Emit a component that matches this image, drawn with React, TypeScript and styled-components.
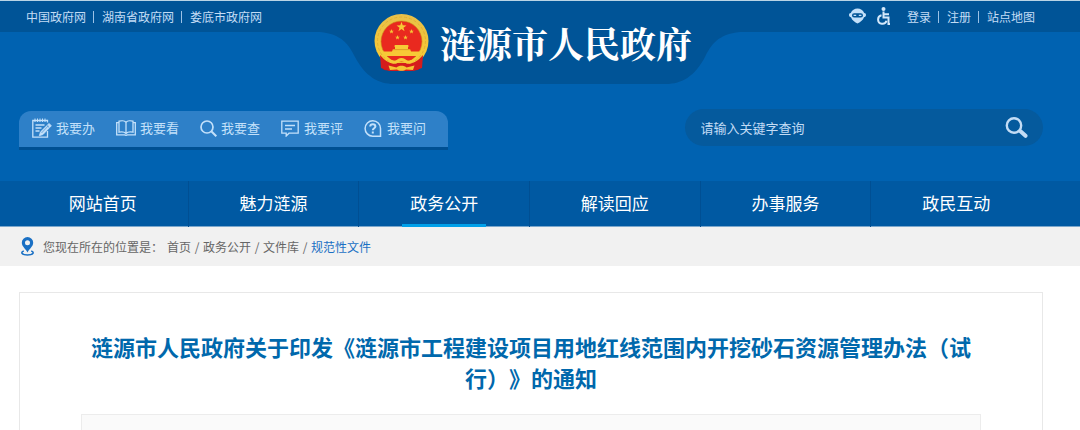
import React from "react";
import styled, { createGlobalStyle } from "styled-components";

const Global = createGlobalStyle`
  *, *::before, *::after { box-sizing: border-box; }
  body { margin: 0; background: #fff; font: 12px/20px "Noto Sans CJK SC", sans-serif; color: #666; }
  a { color: inherit; text-decoration: none; }
  ul, ol { margin: 0; padding: 0; list-style: none; }
`;

const Header = styled.header`
  background: #0062b1;
  border-top: 1px solid #b9d4e6;
`;

const Masthead = styled.div`
  display: grid;
  grid-template-columns: 1fr 420px 1fr;
  align-items: start;
  padding: 0 38px 0 18px;
  background: linear-gradient(#005497 31px, transparent 31px);
`;

const TextLinks = styled.nav<{ $end?: boolean }>`
  display: flex;
  align-items: center;
  justify-content: ${(p) => (p.$end ? "flex-end" : "flex-start")};
  height: 32px;
  padding: 0 7px 0 8px;
  color: #c3dcf5;
  white-space: nowrap;
`;

const Bar = styled.span`
  width: 1px;
  height: 12px;
  margin: 0 8px 0 7px;
  background: #9cc2e6;
`;

const Tools = styled.div`
  display: flex;
  align-items: center;
  gap: 11px;
  margin-right: 16px;
  padding-bottom: 3px;
  a { display: flex; }
`;

const Brand = styled.a`
  position: relative;
  display: flex;
  align-items: center;
  gap: 11px;
  height: 83px;
  padding-left: 54px;
`;

const Notch = styled.svg`
  position: absolute;
  inset: 0;
`;

const Emblem = styled.svg`
  position: relative;
  flex: none;
`;

const SiteName = styled.h1`
  position: relative;
  margin: 0;
  font: 700 36px/48px "Noto Serif CJK SC", "Noto Sans CJK SC", serif;
  color: #fff;
  white-space: nowrap;
`;

const Actions = styled.div`
  display: flex;
  align-items: flex-start;
  justify-content: space-between;
  padding: 25px 37px 31px 19px;
`;

const QuickLinks = styled.nav`
  display: flex;
  gap: 21px;
  margin-top: 2px;
  height: 39px;
  padding: 0 22px 2px 13px;
  background: #2e80c8;
  border-bottom: 3px solid #005093;
  border-radius: 12px 12px 0 0;
`;

const QuickLink = styled.a`
  display: flex;
  align-items: center;
  gap: 4px;
  font-size: 13px;
  color: #c3e0fa;
`;

const Search = styled.form`
  display: flex;
  align-items: center;
  width: 35%;
  height: 37px;
  padding: 0 15px 0 16px;
  border-radius: 19px;
  background: #055a9d;
`;

const SearchInput = styled.input`
  flex: 1;
  min-width: 0;
  padding: 0;
  border: 0;
  outline: 0;
  background: none;
  font: 13px/20px "Noto Sans CJK SC", sans-serif;
  color: #c3dcf5;
  &::placeholder { color: #c3dcf5; opacity: 1; }
`;

const SearchButton = styled.button`
  display: flex;
  padding: 0;
  border: 0;
  background: none;
`;

const MainNav = styled.nav`
  padding: 0 39px 0 18px;
  background: linear-gradient(#0059a2 45px, #7ba7cc 45px);
`;

const NavList = styled.ul`
  display: flex;
`;

const NavItem = styled.li`
  display: flex;
  flex: 1;
  justify-content: center;
  & + & { border-left: 1px solid #004f93; }
`;

const NavLink = styled.a<{ $active?: boolean }>`
  height: 46px;
  padding: 0 8px;
  border-bottom: 3px solid ${(p) => (p.$active ? "#00a0e9" : "transparent")};
  font-size: 17px;
  line-height: 44px;
  color: #fff;
`;

const Crumbs = styled.nav`
  display: flex;
  align-items: center;
  height: 39px;
  padding: 0 20px;
  background: #f1f1f1;
`;

const CrumbLabel = styled.span`
  margin: 0 4px 0 8px;
`;

const CrumbList = styled.ol`
  display: flex;
  li + li::before { content: "/"; display: inline-block; width: 12px; text-align: center; color: #666; }
`;

const CrumbLink = styled.a<{ $current?: boolean }>`
  color: ${(p) => (p.$current ? "#1a70c4" : "#666")};
`;

const Article = styled.main`
  margin: 26px 37px 0 19px;
  padding: 38px 61px 0;
  border: 1px solid #e8e8e8;
  border-bottom: 0;
`;

const Title = styled.h2`
  margin: 0 0 21px;
  font-size: 22px;
  font-weight: 700;
  line-height: 31px;
  text-align: center;
  text-spacing-trim: space-all;
  color: #0068ac;
`;

const Meta = styled.div`
  height: 17px;
  border: 1px solid #ececec;
  border-bottom: 0;
  background: #fafafa;
`;

const star = (cx: number, cy: number, r: number) =>
  Array.from({ length: 10 }, (_, i) => {
    const a = (Math.PI / 5) * i - Math.PI / 2;
    const q = i % 2 ? r * 0.4 : r;
    return `${(cx + q * Math.cos(a)).toFixed(2)},${(cy + q * Math.sin(a)).toFixed(2)}`;
  }).join(" ");

const NationalEmblem = () => (
  <Emblem width="55" height="58" viewBox="0 0 55 58" aria-hidden="true">
    <defs>
      <linearGradient id="gold" x1="0" y1="0" x2="0" y2="1">
        <stop offset="0" stopColor="#e8c04a" />
        <stop offset="0.5" stopColor="#f3c53a" />
        <stop offset="1" stopColor="#f8cf35" />
      </linearGradient>
    </defs>
    <path d="M8 40L47 40L48 52L44 56L36 57H18L10 56L7 52Z" fill="#c8161d" />
    <circle cx="27.5" cy="27" r="27" fill="url(#gold)" />
    <circle cx="27.5" cy="27" r="24" fill="none" stroke="#e0b035" strokeWidth="1" strokeDasharray="3 2" />
    <circle cx="27.5" cy="27.5" r="20.5" fill="#e9291f" stroke="#c98f1d" strokeWidth="0.6" />
    <polygon points={star(27.5, 13, 5.2)} fill="#f7c936" />
    <polygon points={star(17.5, 17.5, 2.5)} fill="#f7c936" />
    <polygon points={star(37.5, 17.5, 2.5)} fill="#f7c936" />
    <polygon points={star(23.5, 23.5, 2.5)} fill="#f7c936" />
    <polygon points={star(31.5, 23.5, 2.5)} fill="#f7c936" />
    <path d="M21 31h13l1 1.5h-1V35h2l1 2.500h9v4.500H9v-4.500h9l1-2.500h2v-2.500h-1z" fill="#f7c936" />
    <path d="M19 35.6h17" stroke="#d98a1d" strokeWidth="0.7" />
    <path d="M13 42h29l-5 4-4 .5-5.500-2.500-5.500 2.500-4-.5z" fill="#e9291f" />
    <path d="M6 41c5 6 10 9 17 9l-7 7-9-3zM49 41c-5 6-10 9-17 9l7 7 9-3z" fill="#d51c1c" />
    <path d="M20 49h15l3 8H17z" fill="#d51c1c" />
    <path d="M13 44c4 3 8 4 11 1 2-1.500 5-1.500 7 0 3 3 7 2 11-1l-3 4c-3 2-6 2.500-8 .5-2-1.500-5-1.500-7 0-2 2-5 1.500-8-.5z" fill="#f7c936" />
    <path d="M14.500 51.500l8 2c2-2.500 8-2.500 10 0l8-2-1.500 4.500-7-.5c-2 1.700-7 1.700-9 0l-7 .5z" fill="#f5c433" />
  </Emblem>
);

const line = { fill: "none", stroke: "#c3e0fa", strokeWidth: 1.3 } as const;

const NoteIcon = () => (
  <svg width="20" height="20" viewBox="0 0 20 20" {...line} aria-hidden="true">
    <path d="M15.500 4.500V2.500H.8v16.700h14.700V13" />
    <path d="M3 0.500v3.500M5.500 .5v3.500M8 .5v3.500M10.500 .5v3.500M13 .5v3.500" strokeWidth="1" />
    <path d="M3.500 7h9M3.500 10h6M3.500 13h4" />
    <path d="M17 5.500l2.400 2.200-8.400 8.800-3.700 1.200 1.200-3.800z" fill="#c3e0fa" strokeWidth="0.8" />
    <path d="M9.500 15l7-7.300M14.800 7.300l2.500 2.300" stroke="#2e80c8" strokeWidth="0.600" />
  </svg>
);
const BookIcon = () => (
  <svg width="20" height="16" viewBox="0 0 20 16" {...line} aria-hidden="true">
    <path d="M10 2.200C8.500 .6 5 .5 3 1.200v11c2.500-.6 5.500-.3 7 1.300 1.500-1.600 4.500-1.900 7-1.300v-11C15 .5 11.500 .6 10 2.200zM10 2v11.500" />
    <path d="M3 2.600H.7v12.200h7.800l1.500.6 1.500-.6h7.800V2.600H17" />
  </svg>
);
const FindIcon = () => (
  <svg width="17" height="17" viewBox="0 0 17 17" {...line} strokeWidth="1.700" aria-hidden="true">
    <circle cx="7" cy="7" r="6" />
    <path d="M11.300 11.300l5 5" strokeWidth="2" />
  </svg>
);
const CommentIcon = () => (
  <svg width="19" height="17" viewBox="0 0 19 17" {...line} aria-hidden="true">
    <path d="M.8 1.200h16.400v12H8l-2.800 2.800v-2.800H.8zM4 5.500h10M4 9h7" />
  </svg>
);
const AskIcon = () => (
  <svg width="19" height="17" viewBox="0 0 19 17" {...line} strokeWidth="1.500" aria-hidden="true">
    <path d="M16.500 16.200H8.700A7.700 7.700 0 1 1 16.500 8.500z" />
    <path d="M6.200 6.600c0-3.200 5.200-3.200 5.200 0C11.400 8.300 8.800 8.300 8.800 10.300M8.800 11.600v2" strokeWidth="2" />
  </svg>
);
const RobotIcon = () => (
  <svg width="17" height="16" viewBox="0 0 17 16" fill="#c3e0fa" aria-hidden="true">
    <path d="M1.800 5C3 2 5.500.4 8.500.4S14 2 15.200 5c1.200 0 1.800.9 1.800 2s-.7 2-2 2.200c-1 3.300-4 4.700-6.500 6.400C6 13.900 3 12.500 2 9.200.700 9 0 8.100 0 7s.600-2 1.800-2z" />
    <rect x="3" y="5.300" width="11" height="4.200" rx="2.100" fill="#005497" />
    <path d="M4.600 7.400h2.600M9.800 7.400h2.600" fill="none" stroke="#c3e0fa" strokeWidth="1.200" />
  </svg>
);
const WheelchairIcon = () => (
  <svg width="14" height="18" viewBox="0 0 14 18" fill="none" stroke="#d3e8fb" strokeWidth="2" aria-hidden="true">
    <circle cx="6.500" cy="2" r="2" fill="#d3e8fb" stroke="none" />
    <path d="M6.500 4.500v6h5v6.500H13M6.500 7.200H12" />
    <path d="M4.500 8.300a4.300 4.300 0 1 0 5 5.500" />
  </svg>
);
const PinIcon = () => (
  <svg width="15" height="19" viewBox="0 0 15 19" fill="#1a70c4" aria-hidden="true">
    <path fillRule="evenodd" d="M7.500 0a5.700 5.700 0 0 1 5.700 5.700C13.200 9.500 9 12 7.500 15.500 6 12 1.800 9.500 1.800 5.700A5.700 5.700 0 0 1 7.500 0zm0 3.200a2.500 2.500 0 1 0 0 5 2.500 2.500 0 0 0 0-5z" />
    <path d="M3.800 14C0 15.200 2 18 7.500 18s7.500-2.800 3.700-4" fill="none" stroke="#1a70c4" strokeWidth="1.600" />
  </svg>
);

const quick = [
  { label: "我要办", icon: <NoteIcon /> },
  { label: "我要看", icon: <BookIcon /> },
  { label: "我要查", icon: <FindIcon /> },
  { label: "我要评", icon: <CommentIcon /> },
  { label: "我要问", icon: <AskIcon /> },
];
const sections = ["网站首页", "魅力涟源", "政务公开", "解读回应", "办事服务", "政民互动"];
const trail = ["首页", "政务公开", "文件库", "规范性文件"];

const Piped = ({ items }: { items: string[] }) => (
  <>
    {items.map((t, i) => (
      <React.Fragment key={t}>
        {i > 0 && <Bar />}
        <a href="#">{t}</a>
      </React.Fragment>
    ))}
  </>
);

export default function App() {
  return (
    <>
      <Global />
      <Header>
        <Masthead>
          <TextLinks>
            <Piped items={["中国政府网", "湖南省政府网", "娄底市政府网"]} />
          </TextLinks>
          <Brand href="#">
            <Notch width="420" height="83" viewBox="0 0 420 83" aria-hidden="true">
              <path d="M0 0H420V31C398 33 391 44 385 56C375 75 362 83 346 83H74C58 83 45 75 35 56C29 44 22 33 0 31Z" fill="#005497" />
            </Notch>
            <NationalEmblem />
            <SiteName>涟源市人民政府</SiteName>
          </Brand>
          <TextLinks $end>
            <Tools>
              <a href="#" aria-label="智能问答"><RobotIcon /></a>
              <a href="#" aria-label="无障碍"><WheelchairIcon /></a>
            </Tools>
            <Piped items={["登录", "注册", "站点地图"]} />
          </TextLinks>
        </Masthead>
        <Actions>
          <QuickLinks>
            {quick.map((q) => (
              <QuickLink href="#" key={q.label}>{q.icon}{q.label}</QuickLink>
            ))}
          </QuickLinks>
          <Search>
            <SearchInput type="text" aria-label="搜索" placeholder="请输入关键字查询" />
            <SearchButton type="button" aria-label="搜索">
              <svg width="23" height="21" viewBox="0 0 23 21" fill="none" stroke="#c3dcf5" aria-hidden="true">
                <circle cx="9" cy="8.500" r="7.200" strokeWidth="2.400" />
                <path d="M14 13l1.500 1.500" strokeWidth="2.400" />
                <path d="M15.500 14.300l5 4.500" strokeWidth="4" strokeLinecap="round" />
              </svg>
            </SearchButton>
          </Search>
        </Actions>
        <MainNav>
          <NavList>
            {sections.map((s) => (
              <NavItem key={s}>
                <NavLink href="#" $active={s === "政务公开"}>{s}</NavLink>
              </NavItem>
            ))}
          </NavList>
        </MainNav>
      </Header>
      <Crumbs>
        <PinIcon />
        <CrumbLabel>您现在所在的位置是：</CrumbLabel>
        <CrumbList>
          {trail.map((t, i) => (
            <li key={t}>
              <CrumbLink href="#" $current={i === trail.length - 1}>{t}</CrumbLink>
            </li>
          ))}
        </CrumbList>
      </Crumbs>
      <Article>
        <Title>涟源市人民政府关于印发《涟源市工程建设项目用地红线范围内开挖砂石资源管理办法（试行）》的通知</Title>
        <Meta />
      </Article>
    </>
  );
}
